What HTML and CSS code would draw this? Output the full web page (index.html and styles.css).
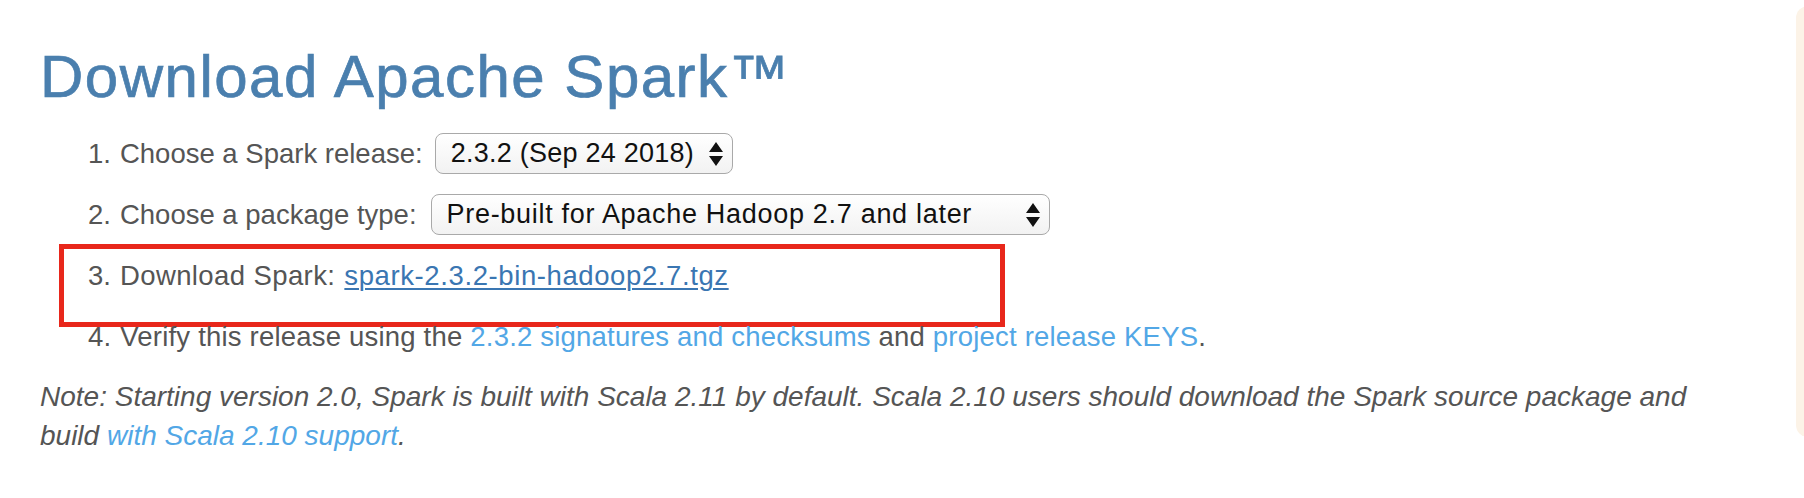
FILE: index.html
```html
<!DOCTYPE html>
<html lang="en">
<head>
<meta charset="utf-8">
<title>Download Apache Spark</title>
<link rel="stylesheet" href="styles.css">
</head>
<body>
<div class="page">
  <main class="content">
    <h1 class="title">Download Apache Spark™</h1>
    <ol class="steps">
      <li class="step">
        <span class="label">Choose a Spark release:</span>
        <span class="select select-release">
          <span class="select-text">2.3.2 (Sep 24 2018)</span>
          <svg class="select-arrows" width="14" height="24" viewBox="0 0 14 24" aria-hidden="true"><path d="M7 0 L14 10 H0 Z M0 14 H14 L7 24 Z" fill="#111"/></svg>
        </span>
      </li>
      <li class="step">
        <span class="label">Choose a package type:</span>
        <span class="select select-package">
          <span class="select-text">Pre-built for Apache Hadoop 2.7 and later</span>
          <svg class="select-arrows" width="14" height="24" viewBox="0 0 14 24" aria-hidden="true"><path d="M7 0 L14 10 H0 Z M0 14 H14 L7 24 Z" fill="#111"/></svg>
        </span>
      </li>
      <li class="step step-marked">
        <span class="label">Download Spark:</span>
        <a class="download-link" href="#">spark-2.3.2-bin-hadoop2.7.tgz</a>
        <span class="annotation" aria-hidden="true"></span>
      </li>
      <li class="step step-verify">
        <span class="label">Verify this release using the <a class="link" href="#">2.3.2 signatures and checksums</a> and <a class="link" href="#">project release KEYS</a>.</span>
      </li>
    </ol>
    <p class="note">Note: Starting version 2.0, Spark is built with Scala 2.11 by default. Scala 2.10 users should download the Spark source package and build <a class="link" href="#">with Scala 2.10 support</a>.</p>
  </main>
  <aside class="sidebar"></aside>
</div>
</body>
</html>
```

FILE: styles.css
```css
html, body {
  margin: 0;
  padding: 0;
  background: #ffffff;
  overflow: hidden;
}

body {
  font-family: "Liberation Sans", Arial, Helvetica, sans-serif;
  color: #555555;
}

.page {
  display: flex;
  align-items: flex-start;
  width: 1804px;
  height: 498px;
}

.content {
  flex: 0 0 1756px;
  padding-left: 40px;
  padding-top: 44px;
  box-sizing: border-box;
}

.title {
  margin: 0;
  font-size: 60px;
  line-height: 66px;
  font-weight: 400;
  letter-spacing: 1.5px;
  color: #4a7fae;
  -webkit-text-stroke: 0.7px #4a7fae;
}

.steps {
  list-style: none;
  margin: 23px 0 0 0;
  padding: 0 0 0 48px;
  counter-reset: step;
}

.step {
  position: relative;
  display: flex;
  align-items: center;
  min-height: 41px;
  margin-bottom: 20px;
  font-size: 27.5px;
  white-space: nowrap;
  counter-increment: step;
}

.step::before {
  content: counter(step) ".";
  margin-right: 9px;
}

.step-marked .label {
  letter-spacing: 0.4px;
}

.step-verify {
  letter-spacing: 0.2px;
}

.select {
  display: inline-flex;
  align-items: center;
  justify-content: space-between;
  box-sizing: border-box;
  height: 41px;
  margin-left: 12px;
  padding: 0 9px 0 15px;
  border: 1px solid #a9a9a9;
  border-radius: 8px;
  background: linear-gradient(#ffffff, #f2f2f2);
  color: #111111;
  font-size: 27px;
}

.select-release {
  width: 298px;
  letter-spacing: 0.25px;
}

.select-package {
  width: 619px;
  margin-left: 14px;
  letter-spacing: 0.7px;
}

.select-arrows {
  flex: 0 0 auto;
}

.download-link {
  margin-left: 9px;
  color: #3a76b2;
  letter-spacing: 0.6px;
  text-decoration: underline;
  text-underline-offset: 3px;
  text-decoration-thickness: 2px;
}

.link {
  color: #52a7e6;
  text-decoration: none;
}

.annotation {
  position: absolute;
  left: -29px;
  top: -11px;
  width: 946px;
  height: 83px;
  box-sizing: border-box;
  border: 5px solid #e8271b;
  pointer-events: none;
}

.note {
  margin: 0;
  max-width: 1690px;
  font-size: 28px;
  line-height: 39px;
  font-style: italic;
  color: #555555;
}

.sidebar {
  flex: 0 0 60px;
  margin-left: 40px;
  margin-top: 6px;
  height: 431px;
  border-radius: 12px;
  background: #fcf3e7;
}
```
